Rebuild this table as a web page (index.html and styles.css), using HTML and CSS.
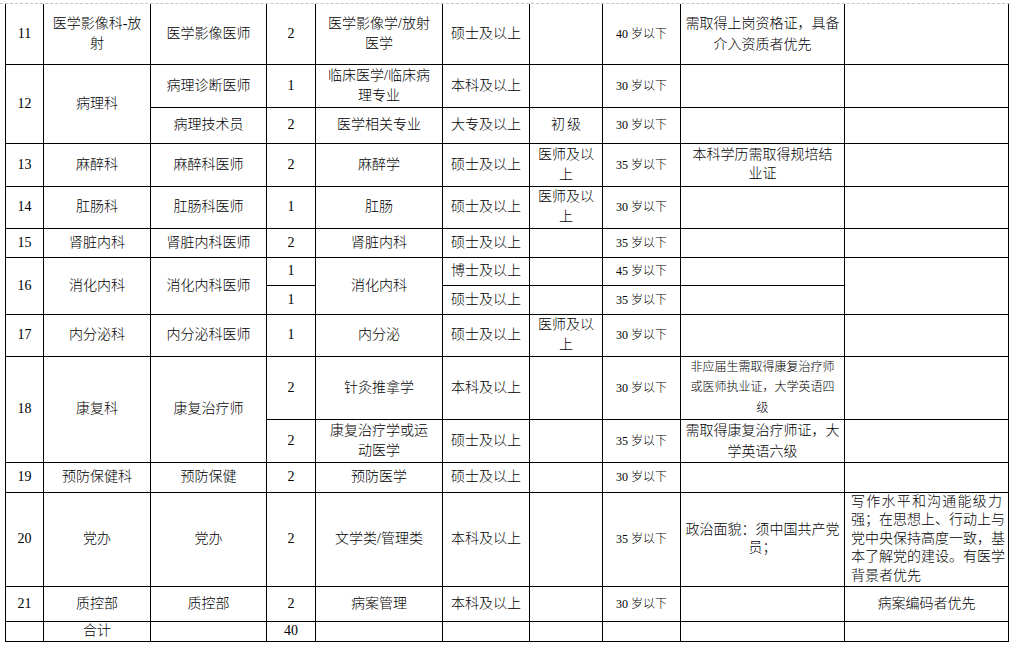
FILE: index.html
```html
<!DOCTYPE html>
<html lang="zh-CN">
<head>
<meta charset="utf-8">
<title>招聘岗位表</title>
<link rel="stylesheet" href="styles.css">
</head>
<body>
<div class="sheet">
  <div class="cut"></div>
  <table class="grid">
    <colgroup>
      <col class="c1"><col class="c2"><col class="c3"><col class="c4"><col class="c5">
      <col class="c6"><col class="c7"><col class="c8"><col class="c9"><col class="c10">
    </colgroup>
    <tbody>
      <tr class="r11">
        <td>11</td>
        <td>医学影像科-放<br>射</td>
        <td>医学影像医师</td>
        <td>2</td>
        <td>医学影像学/放射<br>医学</td>
        <td>硕士及以上</td>
        <td></td>
        <td class="age">40 岁以下</td>
        <td class="note lh21">需取得上岗资格证，具备<br>介入资质者优先</td>
        <td></td>
      </tr>
      <tr class="r12a">
        <td rowspan="2">12</td>
        <td rowspan="2">病理科</td>
        <td>病理诊断医师</td>
        <td>1</td>
        <td>临床医学/临床病<br>理专业</td>
        <td>本科及以上</td>
        <td></td>
        <td class="age">30 岁以下</td>
        <td></td>
        <td></td>
      </tr>
      <tr class="r12b">
        <td>病理技术员</td>
        <td>2</td>
        <td>医学相关专业</td>
        <td>大专及以上</td>
        <td class="wide">初级</td>
        <td class="age">30 岁以下</td>
        <td></td>
        <td></td>
      </tr>
      <tr class="r13">
        <td>13</td>
        <td>麻醉科</td>
        <td>麻醉科医师</td>
        <td>2</td>
        <td>麻醉学</td>
        <td>硕士及以上</td>
        <td>医师及以<br>上</td>
        <td class="age">35 岁以下</td>
        <td class="note lh19">本科学历需取得规培结<br>业证</td>
        <td></td>
      </tr>
      <tr class="r14">
        <td>14</td>
        <td>肛肠科</td>
        <td>肛肠科医师</td>
        <td>1</td>
        <td>肛肠</td>
        <td>硕士及以上</td>
        <td>医师及以<br>上</td>
        <td class="age">30 岁以下</td>
        <td></td>
        <td></td>
      </tr>
      <tr class="r15">
        <td>15</td>
        <td>肾脏内科</td>
        <td>肾脏内科医师</td>
        <td>2</td>
        <td>肾脏内科</td>
        <td>硕士及以上</td>
        <td></td>
        <td class="age">35 岁以下</td>
        <td></td>
        <td></td>
      </tr>
      <tr class="r16a">
        <td rowspan="2">16</td>
        <td rowspan="2">消化内科</td>
        <td rowspan="2">消化内科医师</td>
        <td>1</td>
        <td rowspan="2">消化内科</td>
        <td>博士及以上</td>
        <td></td>
        <td class="age">45 岁以下</td>
        <td></td>
        <td rowspan="2"></td>
      </tr>
      <tr class="r16b">
        <td>1</td>
        <td>硕士及以上</td>
        <td></td>
        <td class="age">35 岁以下</td>
        <td></td>
      </tr>
      <tr class="r17">
        <td>17</td>
        <td>内分泌科</td>
        <td>内分泌科医师</td>
        <td>1</td>
        <td>内分泌</td>
        <td>硕士及以上</td>
        <td>医师及以<br>上</td>
        <td class="age">30 岁以下</td>
        <td></td>
        <td></td>
      </tr>
      <tr class="r18a">
        <td rowspan="2">18</td>
        <td rowspan="2">康复科</td>
        <td rowspan="2">康复治疗师</td>
        <td>2</td>
        <td>针灸推拿学</td>
        <td>本科及以上</td>
        <td></td>
        <td class="age">30 岁以下</td>
        <td class="note small">非应届生需取得康复治疗师<br>或医师执业证，大学英语四<br>级</td>
        <td></td>
      </tr>
      <tr class="r18b">
        <td>2</td>
        <td>康复治疗学或运<br>动医学</td>
        <td>硕士及以上</td>
        <td></td>
        <td class="age">35 岁以下</td>
        <td class="note lh21">需取得康复治疗师证，大<br>学英语六级</td>
        <td></td>
      </tr>
      <tr class="r19">
        <td>19</td>
        <td>预防保健科</td>
        <td>预防保健</td>
        <td>2</td>
        <td>预防医学</td>
        <td>硕士及以上</td>
        <td></td>
        <td class="age">30 岁以下</td>
        <td></td>
        <td></td>
      </tr>
      <tr class="r20">
        <td>20</td>
        <td>党办</td>
        <td>党办</td>
        <td>2</td>
        <td>文学类/管理类</td>
        <td>本科及以上</td>
        <td></td>
        <td class="age">35 岁以下</td>
        <td class="note lh19">政治面貌：须中国共产党<br>员；</td>
        <td class="long"><span class="jl">写作水平和沟通能级力</span><span class="jl">强；在思想上、行动上与</span><span class="jl">党中央保持高度一致，基</span><span class="jl">本了解党的建设。有医学</span><span class="ll">背景者优先</span></td>
      </tr>
      <tr class="r21">
        <td>21</td>
        <td>质控部</td>
        <td>质控部</td>
        <td>2</td>
        <td>病案管理</td>
        <td>本科及以上</td>
        <td></td>
        <td class="age">30 岁以下</td>
        <td></td>
        <td>病案编码者优先</td>
      </tr>
      <tr class="rsum">
        <td></td>
        <td>合计</td>
        <td></td>
        <td>40</td>
        <td></td>
        <td></td>
        <td></td>
        <td></td>
        <td></td>
        <td></td>
      </tr>
    </tbody>
  </table>
</div>
</body>
</html>
```

FILE: styles.css
```css
* { box-sizing: border-box; }

body {
  margin: 0;
  background: #ffffff;
  color: #000000;
  font-family: "Liberation Serif", "Noto Sans CJK SC", serif;
  font-size: 14px;
  font-weight: 300;
}

.sheet {
  padding-top: 3px;
}

.cut {
  width: 1010px;
  border-top: 1px dashed #c4c4c4;
}

.grid {
  margin-left: 5px;
  width: 1004px;
  border-collapse: collapse;
  table-layout: fixed;
}

.c1 { width: 38px; }
.c2 { width: 107px; }
.c3 { width: 116px; }
.c4 { width: 49px; }
.c5 { width: 127px; }
.c6 { width: 87px; }
.c7 { width: 73px; }
.c8 { width: 78px; }
.c9 { width: 164px; }
.c10 { width: 164px; }

.grid td {
  border: 1px solid #000000;
  padding: 0 2px;
  text-align: center;
  vertical-align: middle;
  line-height: 20px;
  white-space: nowrap;
  overflow: hidden;
}

.grid tr:first-child td {
  border-top: none;
}

.r11 { height: 60px; }
.r12a { height: 43px; }
.r12b { height: 36px; }
.r13 { height: 43px; }
.r14 { height: 42px; }
.r15 { height: 29px; }
.r16a { height: 28px; }
.r16b { height: 29px; }
.r17 { height: 42px; }
.r18a { height: 63px; }
.r18b { height: 43px; }
.r19 { height: 30px; }
.r20 { height: 94px; }
.r21 { height: 35px; }
.rsum { height: 20px; }
.rsum td { line-height: 16px; }

.grid td.age {
  font-size: 12px;
}

.grid td.wide {
  letter-spacing: 2px;
  text-indent: 2px;
}

.grid td.lh21 { line-height: 21px; }
.grid td.lh19 { line-height: 18.5px; }

.grid td.small {
  font-size: 12px;
  line-height: 20.5px;
}

.grid td.long {
  text-align: left;
  padding: 0 2px 0 6px;
  line-height: 18.6px;
  white-space: nowrap;
}

.jl {
  display: block;
  text-align: justify;
  text-align-last: justify;
  width: 151px;
}

.ll {
  display: block;
}
```
